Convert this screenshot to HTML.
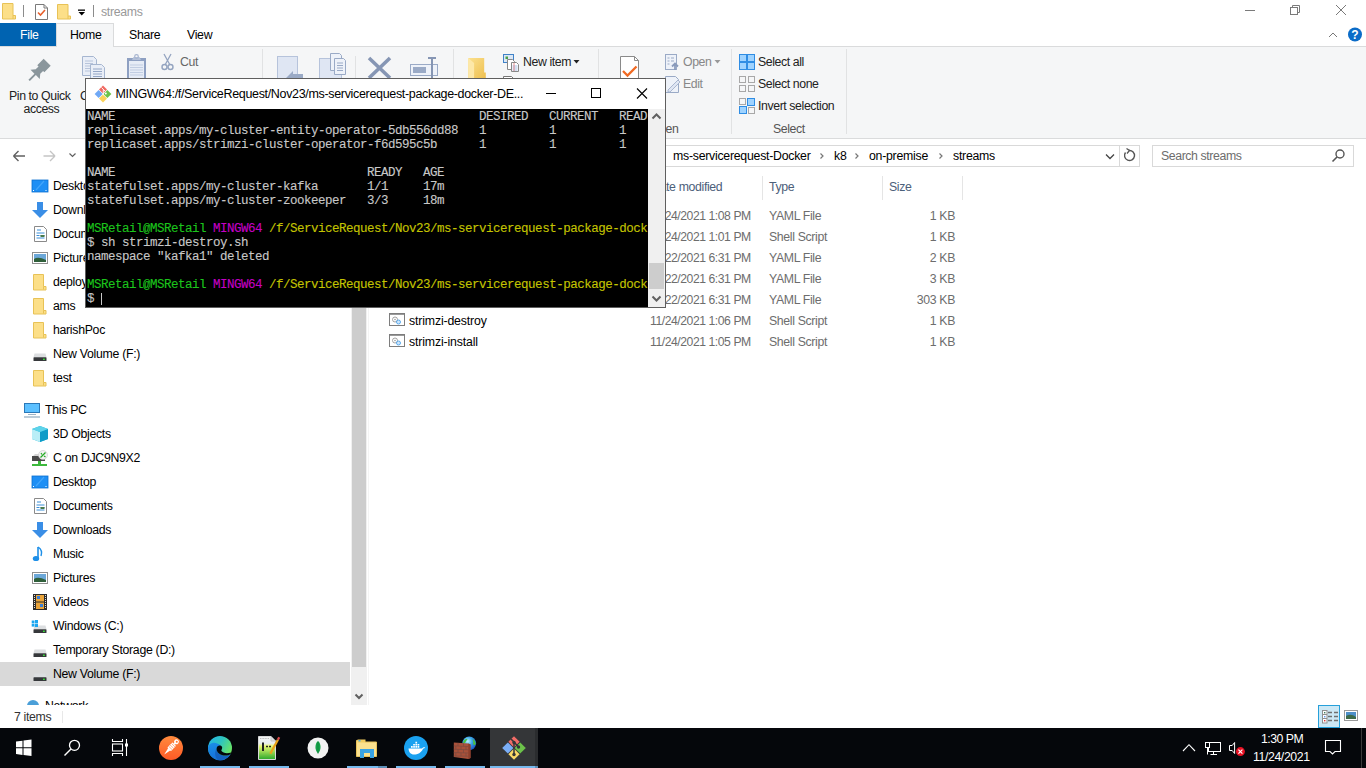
<!DOCTYPE html><html><head><meta charset="utf-8"><style>
*{margin:0;padding:0;box-sizing:border-box}
html,body{width:1366px;height:768px;overflow:hidden;background:#fff;font-family:"Liberation Sans",sans-serif;color:#000}
.a{position:absolute}
.t{position:absolute;white-space:pre}
svg{position:absolute;overflow:visible}
.tl{position:absolute;left:1px;font-family:"Liberation Mono",monospace;font-size:12.5px;letter-spacing:-0.5px;line-height:14px;white-space:pre;color:#c8c8c8;-webkit-text-stroke:0.12px currentColor}
.g{color:#1cc41c}.m{color:#c400c4}.y{color:#c4c400}
</style></head><body>
<svg style="left:0px;top:0px" width="100" height="22" viewBox="0 0 100 22"><path d="M2.5 3.5h10.5v12h2.5v3.5h-13z" fill="#fcdf88" stroke="#e8c256"/><path d="M13 15.5v3.5" stroke="#e8c256"/><line x1="23.5" y1="5" x2="23.5" y2="17" stroke="#8c8c8c"/><path d="M35.5 4.5h8.5l3.5 3.5v11.5h-12z" fill="#fff" stroke="#7a7a7a"/><path d="M44 4.5v3.5h3.5" fill="none" stroke="#7a7a7a"/><path d="M38 12.5l2.5 2.5 4.5-5" fill="none" stroke="#e8602c" stroke-width="1.6"/><path d="M57.5 4.5h10.5v11.5h2.5v3h-13z" fill="#fcdf88" stroke="#e8c256"/><path d="M68 16v3" stroke="#e8c256"/><rect x="78" y="9.5" width="7" height="1.3" fill="#000"/><path d="M78.5 12h6.5l-3.25 3.5z" fill="#000"/><line x1="93.5" y1="5" x2="93.5" y2="17" stroke="#8c8c8c"/></svg>
<div class="t" style="left:101px;top:3.74px;font-size:12.3px;line-height:16px;color:#999;letter-spacing:-0.300px;">streams</div>
<svg style="left:1240px;top:0px" width="126" height="22" viewBox="0 0 126 22"><line x1="5" y1="10.5" x2="15" y2="10.5" stroke="#7a7a7a"/><rect x="50.5" y="7.5" width="7" height="7" fill="none" stroke="#7a7a7a"/><path d="M52.5 7.5v-2h7v7h-2" fill="none" stroke="#7a7a7a"/><path d="M96 5l10 10M106 5l-10 10" stroke="#7a7a7a" stroke-width="1"/></svg>
<div class="a" style="left:0px;top:23px;width:56px;height:23px;background:#0063b1;"></div>
<div class="t" style="left:20px;top:26.74px;font-size:12.3px;line-height:16px;color:#fff;letter-spacing:-0.300px;">File</div>
<div class="a" style="left:0px;top:46px;width:1366px;height:1px;background:#dadbdc;"></div>
<div class="a" style="left:0px;top:47px;width:1366px;height:91px;background:#f5f6f7;"></div>
<div class="a" style="left:0px;top:138px;width:1366px;height:1px;background:#dadbdc;"></div>
<div class="a" style="left:56px;top:23px;width:58px;height:24px;background:#f5f6f7;border:1px solid #dadbdc;border-bottom:none"></div>
<div class="t" style="left:70px;top:26.74px;font-size:12.3px;line-height:16px;color:#000;letter-spacing:-0.300px;">Home</div>
<div class="t" style="left:129px;top:26.74px;font-size:12.3px;line-height:16px;color:#000;letter-spacing:-0.300px;">Share</div>
<div class="t" style="left:187px;top:26.74px;font-size:12.3px;line-height:16px;color:#000;letter-spacing:-0.300px;">View</div>
<svg style="left:1320px;top:24px" width="46" height="22" viewBox="0 0 46 22"><path d="M9 13l4-4 4 4" fill="none" stroke="#777" stroke-width="1"/><circle cx="35" cy="10.5" r="7" fill="#0b6cc8"/><text x="35" y="15" font-family="Liberation Sans" font-weight="bold" font-size="12" fill="#fff" text-anchor="middle">?</text></svg>
<div class="a" style="left:262px;top:49px;width:1px;height:85px;background:#e1e2e3;"></div>
<div class="a" style="left:453px;top:49px;width:1px;height:85px;background:#e1e2e3;"></div>
<div class="a" style="left:598px;top:49px;width:1px;height:85px;background:#e1e2e3;"></div>
<div class="a" style="left:731px;top:49px;width:1px;height:85px;background:#e1e2e3;"></div>
<div class="a" style="left:846px;top:49px;width:1px;height:85px;background:#e1e2e3;"></div>
<div class="a" style="left:355px;top:56px;width:1px;height:22px;background:#e1e2e3;"></div>
<svg style="left:20px;top:52px" width="40" height="32" viewBox="0 0 40 32"><g transform="translate(9.5 28) rotate(45)"><path d="M-1 0.5L1 0.5L1 -8L6.5 -8L3.2 -12L3.2 -16L5 -16L5 -25L-5 -25L-5 -16L-3.2 -16L-3.2 -12L-6.5 -8L-1 -8Z" fill="#8a969c"/></g></svg>
<div class="t" style="left:9px;top:87.74px;font-size:12.3px;line-height:16px;color:#222;letter-spacing:-0.400px;">Pin to Quick</div>
<div class="t" style="left:23.5px;top:100.74px;font-size:12.3px;line-height:16px;color:#222;letter-spacing:-0.400px;">access</div>
<svg style="left:80px;top:54px" width="30" height="26" viewBox="0 0 30 26"><path d="M2.5 2.5h11l3 3v16h-14z" fill="#e9eef7" stroke="#a6b6d0"/><path d="M5 7h8M5 9.5h8M5 12h8M5 14.5h8M5 17h8" stroke="#b7c4db"/><path d="M10.5 10.5h11l3 3v14h-14z" fill="#e9eef7" stroke="#a6b6d0"/><path d="M13 15h9M13 17.5h9M13 20h9M13 22.5h9" stroke="#94a6c6"/></svg>
<div class="t" style="left:80px;top:87.74px;font-size:12.3px;line-height:16px;color:#222;letter-spacing:-0.400px;">Copy</div>
<svg style="left:124px;top:52px" width="26" height="28" viewBox="0 0 26 28"><rect x="3" y="6" width="19" height="24" fill="#8ea0c2"/><rect x="5" y="9" width="15" height="21" fill="#e6ecf6"/><path d="M6 13h13M6 15.5h13M6 18h13M6 20.5h13M6 23h13" stroke="#c1cde2"/><path d="M8 8h9l-1.5-3h-6z" fill="#b3c0d8"/><circle cx="12.5" cy="4.5" r="1.8" fill="none" stroke="#a6b4cf" stroke-width="1.2"/></svg>
<svg style="left:160px;top:52px" width="18" height="20" viewBox="0 0 18 20"><path d="M4 2l6 11M11 2l-6 11" stroke="#94a4c0" stroke-width="1.3"/><circle cx="4.5" cy="15" r="2.5" fill="none" stroke="#94a4c0" stroke-width="1.4"/><circle cx="10.5" cy="15" r="2.5" fill="none" stroke="#94a4c0" stroke-width="1.4"/></svg>
<div class="t" style="left:180px;top:53.74px;font-size:12.3px;line-height:16px;color:#666;letter-spacing:-0.400px;">Cut</div>
<svg style="left:275px;top:54px" width="32" height="26" viewBox="0 0 32 26"><rect x="2.5" y="2.5" width="20" height="24" fill="#dfe6f3" stroke="#b6c3db"/><path d="M11 24l7-7v3h10v6h-17z" fill="#9aaac6"/></svg>
<svg style="left:317px;top:50px" width="32" height="30" viewBox="0 0 32 30"><rect x="2.5" y="8.5" width="22" height="22" fill="#dfe6f3" stroke="#b6c3db"/><path d="M13.5 3.5h9l2 2v15h-11z" fill="#eef2f9" stroke="#9aaac6"/><path d="M17.5 8.5h9l2 2v14h-11z" fill="#eef2f9" stroke="#9aaac6"/><path d="M20 13h6M20 15.5h6M20 18h6M20 20.5h6" stroke="#9aaac6"/></svg>
<svg style="left:366px;top:56px" width="28" height="24" viewBox="0 0 28 24"><path d="M3 2l21 20M24 2l-21 20" stroke="#8696b4" stroke-width="3.6"/></svg>
<svg style="left:408px;top:54px" width="32" height="26" viewBox="0 0 32 26"><rect x="2.5" y="10.5" width="27" height="11" fill="#eef2f9" stroke="#9aaac6"/><rect x="5" y="13" width="13" height="6" fill="#9aaac6"/><path d="M24 4v22" stroke="#8696b4" stroke-width="2"/><path d="M20 4h8" stroke="#8696b4" stroke-width="2"/></svg>
<svg style="left:466px;top:56px" width="22" height="24" viewBox="0 0 22 24"><defs><linearGradient id="nf" x1="0" y1="0" x2="1" y2="1"><stop offset="0" stop-color="#fbe08e"/><stop offset="1" stop-color="#eebf4e"/></linearGradient></defs><path d="M2.3 2.1H18.2V16.4H19.8V22.5H2.3Z" fill="url(#nf)"/><path d="M2.3 2.1L8.1 6.9V22.5H2.3Z" fill="#fde8a8"/></svg>
<svg style="left:500px;top:52px" width="22" height="20" viewBox="0 0 22 20"><rect x="3.5" y="2.5" width="10" height="8" fill="#dbe7f5" stroke="#3f82c8"/><rect x="5.5" y="4.5" width="2.5" height="2.5" fill="#4aa04a"/><path d="M7.5 7.5h5l2 2v8h-7z" fill="#fff" stroke="#888"/><path d="M11.5 10.5h5l2 2v7h-7z" fill="#fff" stroke="#888"/><path d="M12.5 14h5M12.5 16h5M12.5 18h5" stroke="#8fb0e0" stroke-width="0.8"/><path d="M14 11v8" stroke="#e07070" stroke-width="0.8"/></svg>
<div class="t" style="left:523px;top:53.74px;font-size:12.3px;line-height:16px;color:#222;letter-spacing:-0.400px;">New item</div>
<svg style="left:572px;top:58px" width="10" height="8" viewBox="0 0 10 8"><path d="M1.5 2h6l-3 3.5z" fill="#222"/></svg>
<svg style="left:500px;top:74px" width="20" height="6" viewBox="0 0 20 6"><path d="M3.5 5.5v-3h8l2 2" fill="#fff" stroke="#777"/></svg>
<svg style="left:618px;top:54px" width="26" height="26" viewBox="0 0 26 26"><path d="M2.5 2.5h14l4 4v19h-18z" fill="#fff" stroke="#8a8a8a"/><path d="M16.5 2.5v4h4" fill="none" stroke="#8a8a8a"/><path d="M5 17l4.5 4.5 9-9" fill="none" stroke="#f06a23" stroke-width="2.3"/></svg>
<svg style="left:663px;top:52px" width="18" height="20" viewBox="0 0 18 20"><rect x="2.5" y="2.5" width="11" height="15" fill="#eef2f9" stroke="#9aaac6"/><path d="M4.5 6h2M4.5 9h2M4.5 12h2M8 6h3M8 9h3" stroke="#9aaac6" stroke-width="1.2"/><path d="M12 18v-6M9 14.5l3-3 3 3" fill="none" stroke="#8a9bbb" stroke-width="1.8"/></svg>
<div class="t" style="left:683px;top:53.74px;font-size:12.3px;line-height:16px;color:#888;letter-spacing:-0.400px;">Open</div>
<svg style="left:713px;top:58px" width="10" height="8" viewBox="0 0 10 8"><path d="M1.5 2h6l-3 3.5z" fill="#999"/></svg>
<svg style="left:663px;top:74px" width="20" height="20" viewBox="0 0 20 20"><path d="M2.5 2.5h10l3 3v13h-13z" fill="#eef2f9" stroke="#9aaac6"/><path d="M5 16l10-10 2 2-10 10h-2z" fill="#dfe6f3" stroke="#9aaac6" stroke-width="0.8"/></svg>
<div class="t" style="left:683px;top:75.74px;font-size:12.3px;line-height:16px;color:#888;letter-spacing:-0.400px;">Edit</div>
<svg style="left:737px;top:52px" width="20" height="20" viewBox="0 0 20 20"><rect x="2.5" y="2.5" width="7" height="7" fill="#9fd3ff" stroke="#2f8de4"/><rect x="10.5" y="2.5" width="7" height="7" fill="#9fd3ff" stroke="#2f8de4"/><rect x="2.5" y="10.5" width="7" height="7" fill="#9fd3ff" stroke="#2f8de4"/><rect x="10.5" y="10.5" width="7" height="7" fill="#9fd3ff" stroke="#2f8de4"/></svg>
<div class="t" style="left:758px;top:53.74px;font-size:12.3px;line-height:16px;color:#222;letter-spacing:-0.400px;">Select all</div>
<svg style="left:737px;top:74px" width="20" height="20" viewBox="0 0 20 20"><rect x="2.5" y="2.5" width="6" height="6" fill="none" stroke="#a8a8a8"/><rect x="11.5" y="2.5" width="6" height="6" fill="none" stroke="#a8a8a8"/><rect x="2.5" y="11.5" width="6" height="6" fill="none" stroke="#a8a8a8"/><rect x="11.5" y="11.5" width="6" height="6" fill="none" stroke="#a8a8a8"/></svg>
<div class="t" style="left:758px;top:75.74px;font-size:12.3px;line-height:16px;color:#222;letter-spacing:-0.400px;">Select none</div>
<svg style="left:737px;top:96px" width="20" height="20" viewBox="0 0 20 20"><rect x="2.5" y="2.5" width="6" height="6" fill="none" stroke="#a8a8a8"/><rect x="10.5" y="2.5" width="7" height="7" fill="#9fd3ff" stroke="#2f8de4"/><rect x="2.5" y="10.5" width="7" height="7" fill="#9fd3ff" stroke="#2f8de4"/><rect x="11.5" y="11.5" width="6" height="6" fill="none" stroke="#a8a8a8"/></svg>
<div class="t" style="left:758px;top:97.74px;font-size:12.3px;line-height:16px;color:#222;letter-spacing:-0.400px;">Invert selection</div>
<div class="t" style="left:650px;top:120.74px;font-size:12.3px;line-height:16px;color:#555;letter-spacing:-0.400px;">Open</div>
<div class="t" style="left:773px;top:120.74px;font-size:12.3px;line-height:16px;color:#555;letter-spacing:-0.400px;">Select</div>
<svg style="left:0px;top:139px" width="100" height="36" viewBox="0 0 100 36"><path d="M13.5 17h11.5M13.5 17l5-5M13.5 17l5 5" fill="none" stroke="#606060" stroke-width="1.4"/><path d="M55 17h-11.5M55 17l-5-5M55 17l-5 5" fill="none" stroke="#c5c5c5" stroke-width="1.4"/><path d="M69.5 14.5l3 3 3-3" fill="none" stroke="#606060" stroke-width="1.2"/></svg>
<div class="a" style="left:100px;top:145px;width:1040px;height:22px;border:1px solid #d9d9d9;background:#fff"></div>
<div class="a" style="left:1119px;top:146px;width:1px;height:20px;background:#d9d9d9;"></div>
<div class="t" style="left:673px;top:147.74px;font-size:12.3px;line-height:16px;color:#000;letter-spacing:-0.250px;">ms-servicerequest-Docker</div>
<div class="t" style="left:834px;top:147.74px;font-size:12.3px;line-height:16px;color:#000;letter-spacing:-0.250px;">k8</div>
<div class="t" style="left:869px;top:147.74px;font-size:12.3px;line-height:16px;color:#000;letter-spacing:-0.250px;">on-premise</div>
<div class="t" style="left:953px;top:147.74px;font-size:12.3px;line-height:16px;color:#000;letter-spacing:-0.250px;">streams</div>
<svg style="left:0px;top:145px" width="1366" height="22" viewBox="0 0 1366 22"><path d="M820.5 8.5l2.5 2.5-2.5 2.5M855.5 8.5l2.5 2.5-2.5 2.5M939.5 8.5l2.5 2.5-2.5 2.5" fill="none" stroke="#777" stroke-width="1.2"/><path d="M1106 9.5l4 4 4-4" fill="none" stroke="#444" stroke-width="1.3"/><path d="M1125.5 7.5a5 5 0 1 0 3.5-2" fill="none" stroke="#555" stroke-width="1.4"/><path d="M1126.5 3.5l3 2-2.5 3" fill="none" stroke="#555" stroke-width="1.3"/></svg>
<div class="a" style="left:1152px;top:145px;width:202px;height:22px;border:1px solid #d9d9d9;background:#fff"></div>
<div class="t" style="left:1161px;top:147.74px;font-size:12.3px;line-height:16px;color:#6d6d6d;letter-spacing:-0.400px;">Search streams</div>
<svg style="left:1330px;top:148px" width="20" height="16" viewBox="0 0 20 16"><circle cx="10" cy="6" r="4" fill="none" stroke="#555" stroke-width="1.4"/><path d="M7 9l-4.5 4.5" stroke="#555" stroke-width="1.6"/></svg>
<div class="a" style="left:762px;top:176px;width:1px;height:24px;background:#e5e5e5;"></div>
<div class="a" style="left:882px;top:176px;width:1px;height:24px;background:#e5e5e5;"></div>
<div class="a" style="left:962px;top:176px;width:1px;height:24px;background:#e5e5e5;"></div>
<div class="t" style="left:651px;top:178.74px;font-size:12.3px;line-height:16px;color:#4c607a;letter-spacing:-0.350px;">Date modified</div>
<div class="t" style="left:769px;top:178.74px;font-size:12.3px;line-height:16px;color:#4c607a;letter-spacing:-0.350px;">Type</div>
<div class="t" style="left:889px;top:178.74px;font-size:12.3px;line-height:16px;color:#4c607a;letter-spacing:-0.350px;">Size</div>
<div class="t" style="left:650px;top:207.77px;font-size:12.2px;line-height:16px;color:#6d6d6d;letter-spacing:-0.45px">11/24/2021 1:08 PM</div>
<div class="t" style="left:769px;top:207.74px;font-size:12.3px;line-height:16px;color:#6d6d6d;letter-spacing:-0.350px;">YAML File</div>
<div class="t" style="left:855px;width:100px;text-align:right;top:207.74px;font-size:12.3px;letter-spacing:-0.35px;line-height:16px;color:#6d6d6d">1 KB</div>
<div class="t" style="left:650px;top:228.77px;font-size:12.2px;line-height:16px;color:#6d6d6d;letter-spacing:-0.45px">11/24/2021 1:01 PM</div>
<div class="t" style="left:769px;top:228.74px;font-size:12.3px;line-height:16px;color:#6d6d6d;letter-spacing:-0.350px;">Shell Script</div>
<div class="t" style="left:855px;width:100px;text-align:right;top:228.74px;font-size:12.3px;letter-spacing:-0.35px;line-height:16px;color:#6d6d6d">1 KB</div>
<div class="t" style="left:650px;top:249.77px;font-size:12.2px;line-height:16px;color:#6d6d6d;letter-spacing:-0.45px">11/22/2021 6:31 PM</div>
<div class="t" style="left:769px;top:249.74px;font-size:12.3px;line-height:16px;color:#6d6d6d;letter-spacing:-0.350px;">YAML File</div>
<div class="t" style="left:855px;width:100px;text-align:right;top:249.74px;font-size:12.3px;letter-spacing:-0.35px;line-height:16px;color:#6d6d6d">2 KB</div>
<div class="t" style="left:650px;top:270.77px;font-size:12.2px;line-height:16px;color:#6d6d6d;letter-spacing:-0.45px">11/22/2021 6:31 PM</div>
<div class="t" style="left:769px;top:270.74px;font-size:12.3px;line-height:16px;color:#6d6d6d;letter-spacing:-0.350px;">YAML File</div>
<div class="t" style="left:855px;width:100px;text-align:right;top:270.74px;font-size:12.3px;letter-spacing:-0.35px;line-height:16px;color:#6d6d6d">3 KB</div>
<div class="t" style="left:650px;top:291.77px;font-size:12.2px;line-height:16px;color:#6d6d6d;letter-spacing:-0.45px">11/22/2021 6:31 PM</div>
<div class="t" style="left:769px;top:291.74px;font-size:12.3px;line-height:16px;color:#6d6d6d;letter-spacing:-0.350px;">YAML File</div>
<div class="t" style="left:855px;width:100px;text-align:right;top:291.74px;font-size:12.3px;letter-spacing:-0.35px;line-height:16px;color:#6d6d6d">303 KB</div>
<svg style="left:389px;top:313px" width="17" height="14" viewBox="0 0 17 14"><rect x="0.5" y="0.5" width="15" height="12" fill="#fff" stroke="#7d7d7d"/><path d="M1 1.5h14" stroke="#9a9a9a"/><circle cx="6" cy="6.5" r="2.5" fill="none" stroke="#9a9a9a" stroke-width="0.9"/><circle cx="6" cy="6.5" r="0.8" fill="#9a9a9a"/><circle cx="9.5" cy="9" r="2" fill="#cfe6fb" stroke="#3d9be8" stroke-width="0.8"/></svg>
<div class="t" style="left:409px;top:312.74px;font-size:12.3px;line-height:16px;color:#000;letter-spacing:-0.150px;">strimzi-destroy</div>
<div class="t" style="left:650px;top:312.77px;font-size:12.2px;line-height:16px;color:#6d6d6d;letter-spacing:-0.45px">11/24/2021 1:06 PM</div>
<div class="t" style="left:769px;top:312.74px;font-size:12.3px;line-height:16px;color:#6d6d6d;letter-spacing:-0.350px;">Shell Script</div>
<div class="t" style="left:855px;width:100px;text-align:right;top:312.74px;font-size:12.3px;letter-spacing:-0.35px;line-height:16px;color:#6d6d6d">1 KB</div>
<svg style="left:389px;top:334px" width="17" height="14" viewBox="0 0 17 14"><rect x="0.5" y="0.5" width="15" height="12" fill="#fff" stroke="#7d7d7d"/><path d="M1 1.5h14" stroke="#9a9a9a"/><circle cx="6" cy="6.5" r="2.5" fill="none" stroke="#9a9a9a" stroke-width="0.9"/><circle cx="6" cy="6.5" r="0.8" fill="#9a9a9a"/><circle cx="9.5" cy="9" r="2" fill="#cfe6fb" stroke="#3d9be8" stroke-width="0.8"/></svg>
<div class="t" style="left:409px;top:333.74px;font-size:12.3px;line-height:16px;color:#000;letter-spacing:-0.150px;">strimzi-install</div>
<div class="t" style="left:650px;top:333.77px;font-size:12.2px;line-height:16px;color:#6d6d6d;letter-spacing:-0.45px">11/24/2021 1:05 PM</div>
<div class="t" style="left:769px;top:333.74px;font-size:12.3px;line-height:16px;color:#6d6d6d;letter-spacing:-0.350px;">Shell Script</div>
<div class="t" style="left:855px;width:100px;text-align:right;top:333.74px;font-size:12.3px;letter-spacing:-0.35px;line-height:16px;color:#6d6d6d">1 KB</div>
<div class="a" style="left:0px;top:662px;width:350px;height:24px;background:#d9d9d9;"></div>
<div class="a" style="left:0;top:170px;width:350px;height:535px;overflow:hidden">
<svg style="left:32px;top:10.0px" width="16" height="12" viewBox="0 0 16 12"><rect x="0" y="0" width="16" height="12" fill="#1e8ff5" stroke="#0b6fd0" stroke-width="0.8"/><path d="M4 10l8-9" stroke="#5ab4ff" stroke-width="1.2" opacity="0.6"/><path d="M1 10.5h14" stroke="#fff" stroke-width="1" stroke-dasharray="1 11.5 1 1"/></svg>
<div class="t" style="left:53px;top:7.74px;font-size:12.3px;line-height:16px;letter-spacing:-0.3px">Desktop</div>
<svg style="left:32px;top:32.0px" width="16" height="16" viewBox="0 0 16 16"><path d="M5 0h6v8h5l-8 8l-8-8h5z" fill="#3a8ee6"/></svg>
<div class="t" style="left:53px;top:31.74px;font-size:12.3px;line-height:16px;letter-spacing:-0.3px">Downloads</div>
<svg style="left:34px;top:56.0px" width="13" height="16" viewBox="0 0 13 16"><path d="M0.5 0.5h9l3 3v12h-12z" fill="#fff" stroke="#8a8a8a"/><path d="M3 4h4M2.5 7h8M2.5 9.5h3M6.5 9.5h4M2.5 12h8" stroke="#3b8fd8" stroke-width="1"/><rect x="6.5" y="9" width="4" height="2" fill="#4a7a4a"/></svg>
<div class="t" style="left:53px;top:55.74px;font-size:12.3px;line-height:16px;letter-spacing:-0.3px">Documents</div>
<svg style="left:32px;top:82.0px" width="16" height="12" viewBox="0 0 16 12"><rect x="0.5" y="0.5" width="15" height="11" fill="#fff" stroke="#8f8f8f"/><rect x="2" y="2" width="12" height="8" fill="#6ba7d8"/><path d="M2 7q4-3 12 1v2h-12z" fill="#2f5f3a"/></svg>
<div class="t" style="left:53px;top:79.74px;font-size:12.3px;line-height:16px;letter-spacing:-0.3px">Pictures</div>
<svg style="left:33px;top:104.0px" width="16" height="17" viewBox="0 0 16 17"><path d="M0.5 0.5h10v12h2.5v3.5h-12.5z" fill="#fcdf88" stroke="#e8c256"/><path d="M10.5 12.5v3" stroke="#e8c256"/></svg>
<div class="t" style="left:53px;top:103.74px;font-size:12.3px;line-height:16px;letter-spacing:-0.3px">deployment</div>
<svg style="left:33px;top:128.0px" width="16" height="17" viewBox="0 0 16 17"><path d="M0.5 0.5h10v12h2.5v3.5h-12.5z" fill="#fcdf88" stroke="#e8c256"/><path d="M10.5 12.5v3" stroke="#e8c256"/></svg>
<div class="t" style="left:53px;top:127.74px;font-size:12.3px;line-height:16px;letter-spacing:-0.3px">ams</div>
<svg style="left:33px;top:152.0px" width="16" height="17" viewBox="0 0 16 17"><path d="M0.5 0.5h10v12h2.5v3.5h-12.5z" fill="#fcdf88" stroke="#e8c256"/><path d="M10.5 12.5v3" stroke="#e8c256"/></svg>
<div class="t" style="left:53px;top:151.74px;font-size:12.3px;line-height:16px;letter-spacing:-0.3px">harishPoc</div>
<svg style="left:32px;top:179.5px" width="16" height="14" viewBox="0 0 16 14"><path d="M2.5 3.5h11l1 3.8h-13z" fill="#dcdee0"/><rect x="1.5" y="7.3" width="13" height="3.8" rx="0.6" fill="#36383b"/><rect x="11" y="8.6" width="1.8" height="1.4" fill="#39e039"/></svg>
<div class="t" style="left:53px;top:175.74px;font-size:12.3px;line-height:16px;letter-spacing:-0.3px">New Volume (F:)</div>
<svg style="left:33px;top:200.0px" width="16" height="17" viewBox="0 0 16 17"><path d="M0.5 0.5h10v12h2.5v3.5h-12.5z" fill="#fcdf88" stroke="#e8c256"/><path d="M10.5 12.5v3" stroke="#e8c256"/></svg>
<div class="t" style="left:53px;top:199.74px;font-size:12.3px;line-height:16px;letter-spacing:-0.3px">test</div>
<svg style="left:24px;top:233.0px" width="16" height="16" viewBox="0 0 16 16"><rect x="0.5" y="0.5" width="15" height="9" fill="#5cc0ff" stroke="#2a78b8"/><path d="M4 11.5h8" stroke="#9fb4c6"/><path d="M0 14h16" stroke="#8faabf" stroke-width="1.2"/></svg>
<div class="t" style="left:45px;top:231.74px;font-size:12.3px;line-height:16px;letter-spacing:-0.3px">This PC</div>
<svg style="left:32px;top:256.0px" width="16" height="16" viewBox="0 0 16 16"><path d="M8 0l8 3v10l-8 3l-8-3v-10z" fill="#1fb5d6"/><path d="M0 3l8 3v10l-8-3z" fill="#b9eef7"/><path d="M8 6l8-3v10l-8 3z" fill="#0e9cc8"/><path d="M0 3l8-3l8 3l-8 3z" fill="#5ed3ea"/></svg>
<div class="t" style="left:53px;top:255.74px;font-size:12.3px;line-height:16px;letter-spacing:-0.3px">3D Objects</div>
<svg style="left:32px;top:280.0px" width="16" height="16" viewBox="0 0 16 16"><path d="M1 6l2-2h8l2 2z" fill="#d6d6d6"/><rect x="0" y="6" width="13" height="5" fill="#4a4a4a"/><rect x="6" y="11" width="3" height="3" fill="#3cb83c"/><rect x="0" y="14" width="15" height="2" fill="#3cb83c"/><circle cx="11" cy="5" r="4.5" fill="#f2f2f2" stroke="#c8c8c8" stroke-width="0.6"/><path d="M8.5 7.5l5-5M9 3l1 1.5M12 6l1.5 1" stroke="#22aa22" stroke-width="1.2"/></svg>
<div class="t" style="left:53px;top:279.74px;font-size:12.3px;line-height:16px;letter-spacing:-0.3px">C on DJC9N9X2</div>
<svg style="left:32px;top:306.0px" width="16" height="12" viewBox="0 0 16 12"><rect x="0" y="0" width="16" height="12" fill="#1e8ff5" stroke="#0b6fd0" stroke-width="0.8"/><path d="M4 10l8-9" stroke="#5ab4ff" stroke-width="1.2" opacity="0.6"/><path d="M1 10.5h14" stroke="#fff" stroke-width="1" stroke-dasharray="1 11.5 1 1"/></svg>
<div class="t" style="left:53px;top:303.74px;font-size:12.3px;line-height:16px;letter-spacing:-0.3px">Desktop</div>
<svg style="left:34px;top:328.0px" width="13" height="16" viewBox="0 0 13 16"><path d="M0.5 0.5h9l3 3v12h-12z" fill="#fff" stroke="#8a8a8a"/><path d="M3 4h4M2.5 7h8M2.5 9.5h3M6.5 9.5h4M2.5 12h8" stroke="#3b8fd8" stroke-width="1"/><rect x="6.5" y="9" width="4" height="2" fill="#4a7a4a"/></svg>
<div class="t" style="left:53px;top:327.74px;font-size:12.3px;line-height:16px;letter-spacing:-0.3px">Documents</div>
<svg style="left:32px;top:352.0px" width="16" height="16" viewBox="0 0 16 16"><path d="M5 0h6v8h5l-8 8l-8-8h5z" fill="#3a8ee6"/></svg>
<div class="t" style="left:53px;top:351.74px;font-size:12.3px;line-height:16px;letter-spacing:-0.3px">Downloads</div>
<svg style="left:32px;top:376.0px" width="16" height="16" viewBox="0 0 16 16"><path d="M6 1v11" stroke="#1d8fe8" stroke-width="1.6"/><ellipse cx="4" cy="12.5" rx="3.2" ry="2.6" fill="#1d8fe8"/><path d="M6 1q5 3 3 9" fill="none" stroke="#1d8fe8" stroke-width="1.4"/></svg>
<div class="t" style="left:53px;top:375.74px;font-size:12.3px;line-height:16px;letter-spacing:-0.3px">Music</div>
<svg style="left:32px;top:402.0px" width="16" height="12" viewBox="0 0 16 12"><rect x="0.5" y="0.5" width="15" height="11" fill="#fff" stroke="#8f8f8f"/><rect x="2" y="2" width="12" height="8" fill="#6ba7d8"/><path d="M2 7q4-3 12 1v2h-12z" fill="#2f5f3a"/></svg>
<div class="t" style="left:53px;top:399.74px;font-size:12.3px;line-height:16px;letter-spacing:-0.3px">Pictures</div>
<svg style="left:32px;top:424.0px" width="16" height="16" viewBox="0 0 16 16"><rect x="1" y="0" width="14" height="16" fill="#2b2b2b"/><rect x="4" y="1" width="8" height="6.5" fill="#e8a33a"/><rect x="4" y="8.5" width="8" height="6.5" fill="#e8a33a"/><rect x="5" y="2" width="3" height="3" fill="#3a7fd5"/><rect x="8" y="10" width="3" height="3" fill="#3a7fd5"/><path d="M2.5 1v14M13.5 1v14" stroke="#ddd" stroke-width="1" stroke-dasharray="1 1"/></svg>
<div class="t" style="left:53px;top:423.74px;font-size:12.3px;line-height:16px;letter-spacing:-0.3px">Videos</div>
<svg style="left:32px;top:451.5px" width="16" height="14" viewBox="0 0 16 14"><path d="M2.5 3.5h11l1 3.8h-13z" fill="#dcdee0"/><rect x="1.5" y="7.3" width="13" height="3.8" rx="0.6" fill="#36383b"/><rect x="11" y="8.6" width="1.8" height="1.4" fill="#39e039"/><rect x="-0.3" y="-1.5" width="2.8" height="2.8" fill="#1ba6f0"/><rect x="3" y="-2" width="3" height="3.3" fill="#1ba6f0"/><rect x="-0.3" y="1.8" width="2.8" height="2.8" fill="#1ba6f0"/><rect x="3" y="1.8" width="3" height="3.2" fill="#1ba6f0"/></svg>
<div class="t" style="left:53px;top:447.74px;font-size:12.3px;line-height:16px;letter-spacing:-0.3px">Windows (C:)</div>
<svg style="left:32px;top:475.5px" width="16" height="14" viewBox="0 0 16 14"><path d="M2.5 3.5h11l1 3.8h-13z" fill="#dcdee0"/><rect x="1.5" y="7.3" width="13" height="3.8" rx="0.6" fill="#36383b"/><rect x="11" y="8.6" width="1.8" height="1.4" fill="#39e039"/></svg>
<div class="t" style="left:53px;top:471.74px;font-size:12.3px;line-height:16px;letter-spacing:-0.3px">Temporary Storage (D:)</div>
<svg style="left:32px;top:499.5px" width="16" height="14" viewBox="0 0 16 14"><path d="M2.5 3.5h11l1 3.8h-13z" fill="#dcdee0"/><rect x="1.5" y="7.3" width="13" height="3.8" rx="0.6" fill="#36383b"/><rect x="11" y="8.6" width="1.8" height="1.4" fill="#39e039"/></svg>
<div class="t" style="left:53px;top:495.74px;font-size:12.3px;line-height:16px;letter-spacing:-0.3px">New Volume (F:)</div>
<svg style="left:24px;top:528.0px" width="16" height="16" viewBox="0 0 16 16"><path d="M3 8a6 6 0 0 1 12 0z" fill="#4a9fd8"/><path d="M0 8h16" stroke="#2d7fbf" stroke-width="1.2"/></svg>
<div class="t" style="left:45px;top:527.74px;font-size:12.3px;line-height:16px;letter-spacing:-0.3px">Network</div>
</div>
<div class="a" style="left:351px;top:176px;width:16px;height:529px;background:#f0f0f0;"></div>
<div class="a" style="left:352px;top:190px;width:14px;height:477px;background:#cdcdcd;"></div>
<svg style="left:351px;top:690px" width="16" height="14" viewBox="0 0 16 14"><path d="M4.5 4.5l3.5 3.5 3.5-3.5" fill="none" stroke="#606060" stroke-width="2"/></svg>
<div class="a" style="left:368px;top:176px;width:1px;height:529px;background:#f4f4f4;"></div>
<div class="t" style="left:14px;top:708.74px;font-size:12.3px;line-height:16px;color:#333;letter-spacing:-0.350px;">7 items</div>
<div class="a" style="left:62px;top:711px;width:1px;height:12px;background:#e8e8e8;"></div>
<div class="a" style="left:1318px;top:705px;width:22px;height:23px;background:#cce8f5;border:1px solid #26a0da"></div>
<svg style="left:1321px;top:709px" width="18" height="16" viewBox="0 0 18 16"><rect x="1.5" y="1.5" width="4.5" height="12.5" fill="#fff" stroke="#8f8f8f"/><path d="M1.5 5.5h4.5M1.5 9.5h4.5" stroke="#8f8f8f"/><rect x="3" y="3" width="1.4" height="1.4" fill="#3f7f5f"/><rect x="3" y="7" width="1.4" height="1.4" fill="#5a9af0"/><rect x="3" y="11" width="1.4" height="1.4" fill="#d33"/><path d="M7 3.5h4M13 3.5h4M7 7.5h4M13 7.5h4M7 11.5h4M13 11.5h4" stroke="#707070" stroke-width="1.3"/></svg>
<svg style="left:1344px;top:710px" width="15" height="11" viewBox="0 0 15 11"><rect x="0.5" y="0.5" width="13" height="10" fill="#fff" stroke="#9a9a9a"/><rect x="2" y="2" width="10" height="7" fill="#4d8fc9"/><path d="M2 6q5-3 10 1v2h-10z" fill="#3e6b4a"/></svg>
<div class="a" style="left:85px;top:78px;width:581px;height:230px;border:1px solid #5f5f5f;background:#fff">
<svg style="left:8px;top:6px" width="18" height="18" viewBox="0 0 18 18"><path d="M9 0.6l4 4-4 4-4-4z" fill="#f06b63"/><path d="M0.6 9l4-4 4 4-4 4z" fill="#6fa8f5"/><path d="M9.4 9l4-4 4 4-4 4z" fill="#6cc24a"/><path d="M5 13.4l4-4 4 4-4 4z" fill="#fad25a"/><path d="M7.5 2.5l1.8 1.8v6M9.3 4.3l2.2 2.2" stroke="#fff" stroke-width="0.9" fill="none"/><circle cx="11.8" cy="8.6" r="1" fill="#fff"/></svg>
<div class="t" style="left:29.5px;top:6.7px;font-size:12.5px;letter-spacing:-0.33px;line-height:16px">MINGW64:/f/ServiceRequest/Nov23/ms-servicerequest-package-docker-DE...</div>
<svg style="left:440px;top:0px" width="140" height="30" viewBox="0 0 140 30"><line x1="20" y1="14.5" x2="30" y2="14.5" stroke="#000"/><rect x="65.5" y="9.5" width="9" height="9" fill="none" stroke="#000"/><path d="M111 9.5l10 10M121 9.5l-10 10" stroke="#000" stroke-width="1.1"/></svg>
<div class="a" style="left:0;top:30px;width:562px;height:198px;background:#000;overflow:hidden">
<div class="tl" style="top:1px">NAME                                                    DESIRED   CURRENT   READ</div>
<div class="tl" style="top:15px">replicaset.apps/my-cluster-entity-operator-5db556dd88   1         1         1</div>
<div class="tl" style="top:29px">replicaset.apps/strimzi-cluster-operator-f6d595c5b      1         1         1</div>
<div class="tl" style="top:57px">NAME                                    READY   AGE</div>
<div class="tl" style="top:71px">statefulset.apps/my-cluster-kafka       1/1     17m</div>
<div class="tl" style="top:85px">statefulset.apps/my-cluster-zookeeper   3/3     18m</div>
<div class="tl" style="top:113px"><span class="g">MSRetail@MSRetail</span> <span class="m">MINGW64</span> <span class="y">/f/ServiceRequest/Nov23/ms-servicerequest-package-dock</span></div>
<div class="tl" style="top:127px">$ sh strimzi-destroy.sh</div>
<div class="tl" style="top:141px">namespace &quot;kafka1&quot; deleted</div>
<div class="tl" style="top:169px"><span class="g">MSRetail@MSRetail</span> <span class="m">MINGW64</span> <span class="y">/f/ServiceRequest/Nov23/ms-servicerequest-package-dock</span></div>
<div class="tl" style="top:183px">$ </div>
<div class="a" style="left:15px;top:184px;width:1px;height:12px;background:#c8c8c8;"></div>
</div>
<div class="a" style="left:562px;top:30px;width:17px;height:198px;background:#f0f0f0">
<div class="a" style="left:1px;top:154px;width:15px;height:26px;background:#cdcdcd;"></div>
<svg style="left:0px;top:0px" width="17" height="198" viewBox="0 0 17 198"><path d="M4.5 9.5l4-4 4 4" fill="none" stroke="#606060" stroke-width="2"/><path d="M4.5 187.5l4 4 4-4" fill="none" stroke="#606060" stroke-width="2"/></svg>
</div></div>
<div class="a" style="left:0px;top:728px;width:1366px;height:40px;background:#05070b;"></div>
<svg style="left:15px;top:739px" width="18" height="18" viewBox="0 0 18 18"><path d="M1 2.6l6.5-0.9v6.6h-6.5z M8.5 1.6l8-1.1v7.8h-8z M1 9.3h6.5v6.6l-6.5-0.9z M8.5 9.3h8v7.8l-8-1.1z" fill="#fff"/></svg>
<svg style="left:62px;top:738px" width="20" height="20" viewBox="0 0 20 20"><circle cx="12.5" cy="7.3" r="5" fill="none" stroke="#fff" stroke-width="1.3"/><path d="M9 11l-6.5 6.5" stroke="#fff" stroke-width="1.4"/></svg>
<svg style="left:111px;top:739px" width="20" height="18" viewBox="0 0 20 18"><path d="M1.5 0v2.5h10V0M1.5 17v-2.5h10V17" fill="none" stroke="#fff" stroke-width="1.1"/><rect x="1.5" y="5" width="10" height="7" fill="none" stroke="#fff" stroke-width="1.1"/><path d="M15.5 0v17" stroke="#fff" stroke-width="1.1"/><rect x="14" y="4.5" width="3" height="3" fill="#fff"/></svg>
<svg style="left:159px;top:736px" width="24" height="24" viewBox="0 0 24 24"><defs><linearGradient id="pm" x1="0" y1="0" x2="0" y2="1"><stop offset="0" stop-color="#ff8a3d"/><stop offset="1" stop-color="#ff5a26"/></linearGradient></defs><circle cx="12" cy="12" r="12" fill="url(#pm)"/><g transform="translate(5.2 18.5) rotate(-46)"><path d="M0 0L7.5 -1.6L7.5 1.6Z" fill="#fff"/><rect x="7" y="-2.6" width="7.5" height="5.2" rx="1" fill="#fff"/><path d="M9 -2.6v5.2M11 -2.6v5.2M13 -2.6v5.2" stroke="#ff7a3a" stroke-width="0.6"/><path d="M14.5 -1h1.5v2h-1.5z" fill="#fff"/><circle cx="17.7" cy="0" r="2.4" fill="#fff"/><circle cx="17.9" cy="0.2" r="1" fill="#ff7a3a"/></g></svg>
<svg style="left:208px;top:736px" width="24" height="24" viewBox="0 0 24 24"><defs><linearGradient id="eg" x1="0" y1="0" x2="1" y2="0.6"><stop offset="0" stop-color="#25b5ec"/><stop offset="0.5" stop-color="#2ec4c0"/><stop offset="1" stop-color="#6ee85e"/></linearGradient><linearGradient id="eb" x1="0" y1="0" x2="0.3" y2="1"><stop offset="0" stop-color="#1b8fe8"/><stop offset="1" stop-color="#1670d8"/></linearGradient></defs><circle cx="12" cy="12" r="12" fill="url(#eg)"/><path d="M0 12C0.5 7 7 4.5 12.5 9.5L9 11.5C7 14 7.5 19 11 21C15 22.8 19.5 21.5 22.6 18A12 12 0 0 1 0 12Z" fill="url(#eb)"/><path d="M8.6 12C8.5 14.5 9.3 16.2 11 17.5C14 20 19 20.3 22.8 18A12 12 0 0 1 9.5 23.7C7 21 6.2 16 8.6 12Z" fill="#1462c0"/><path d="M8.6 12.5C8.8 9.5 12.5 8.5 14 10.8C14.6 12 13.6 13.8 13.3 14.8C15 17.5 19.5 17.6 23 16.6L22.6 18.3C19 20.3 14 20 11 17.5C9.3 16.2 8.5 14.5 8.6 12.5Z" fill="#03060a"/></svg>
<div class="a" style="left:200px;top:766px;width:40px;height:2px;background:#76b9ed;"></div>
<svg style="left:257px;top:735px" width="24" height="26" viewBox="0 0 24 26"><defs><linearGradient id="np" x1="0" y1="0" x2="0" y2="1"><stop offset="0" stop-color="#f4f6f6"/><stop offset="0.3" stop-color="#e8eef0"/><stop offset="0.42" stop-color="#e8f870"/><stop offset="1" stop-color="#2aa82a"/></linearGradient></defs><path d="M1.5 1.5h12.5l4.5 4.5v18.5h-17z" fill="url(#np)" stroke="#d8d8d8"/><path d="M14 1.5v4.5h4.5" fill="#ddd" stroke="#c8c8c8"/><path d="M3 3.5h9" stroke="#bbb" stroke-dasharray="1 0.6"/><rect x="5" y="7.5" width="2" height="8.5" fill="#222"/><path d="M9 11.5h5" stroke="#222" stroke-width="1.6" stroke-dasharray="2 1"/><path d="M13.3 18.7l7.6-14" stroke="#e8a21a" stroke-width="2.3"/><path d="M20.9 4.7l1.3-2.4" stroke="#d84a4a" stroke-width="2.3"/></svg>
<div class="a" style="left:249px;top:766px;width:40px;height:2px;background:#76b9ed;"></div>
<svg style="left:307px;top:737px" width="22" height="22" viewBox="0 0 22 22"><circle cx="11" cy="11" r="10.5" fill="#f2f2f2"/><path d="M11 4C14.3 6.5 14.5 13 11 16.5C7.5 13 7.7 6.5 11 4Z" fill="#16a34a"/><path d="M11 5v11.5" stroke="#0f7f3a" stroke-width="0.7"/></svg>
<svg style="left:355px;top:738px" width="24" height="20" viewBox="0 0 24 20"><path d="M1.5 2.5h7l1.5 1.5h11.5v14.5h-20z" fill="#fbe18f" stroke="#e8c25a"/><rect x="2.5" y="1.5" width="8" height="3" fill="#f3cd60"/><rect x="3.5" y="2" width="2" height="1.5" fill="#4fb0e5"/><path d="M5 20v-9h14v9h-4v-5h-6v5z" fill="#3aa3e3"/></svg>
<div class="a" style="left:347px;top:766px;width:31px;height:2px;background:#76b9ed;"></div>
<div class="a" style="left:378px;top:766px;width:9px;height:2px;background:#5c8fb8;"></div>
<svg style="left:404px;top:736px" width="24" height="24" viewBox="0 0 24 24"><circle cx="12" cy="12" r="12" fill="#1aa1f0"/><path d="M4.5 12.5h13.5c0.8-1.2 2.2-1.6 3.2-1.2c-0.3 0.9-1.2 1.4-2.2 1.4c-1.6 4-5.3 5.8-9 5.8c-3.3 0-5.2-2.2-5.5-6z" fill="#fff"/><path d="M7 11.8v-1.7h1.7v1.7zM9.2 11.8v-1.7h1.7v1.7zM11.4 11.8v-1.7h1.7v1.7zM13.6 11.8v-1.7h1.7v1.7zM9.2 9.6v-1.7h1.7v1.7zM11.4 9.6v-1.7h1.7v1.7zM13.6 9.6v-1.7h1.7v1.7zM11.4 7.4v-1.7h1.7v1.7z" fill="#fff"/></svg>
<div class="a" style="left:396px;top:766px;width:40px;height:2px;background:#76b9ed;"></div>
<svg style="left:452px;top:736px" width="24" height="24" viewBox="0 0 24 24"><defs><radialGradient id="gl" cx="0.4" cy="0.35" r="0.7"><stop offset="0" stop-color="#bdf2ff"/><stop offset="0.45" stop-color="#3aa6e6"/><stop offset="1" stop-color="#1a4fc0"/></radialGradient></defs><circle cx="17.2" cy="7.3" r="6.9" fill="url(#gl)"/><path d="M11 6.5c1-3 3-4 4.5-3.5c-0.5 1.5-2 2-2.2 3.8c-0.8 0.5-1.6 0.3-2.3-0.3zM20.5 3c1.5 0.8 3 2.5 3.2 5c-0.8 1.5-1.8 1.2-2.5 0.2c0.5-1.8-0.2-3.5-0.7-5.2z" fill="#4cc43a"/><path d="M1.8 6.4l14.5 1.2l2.2 1v13.5l-2.2 0.8l-14.5-1.8z" fill="#a9513a"/><path d="M16.3 7.6l2.2 1v13.5l-2.2 0.8z" fill="#8e3f2c"/><path d="M1.8 9.8l14.5 0.8M1.8 13.2l14.5 0.6M1.8 16.6l14.5 0.4M1.8 20l14.5 0.2M6 6.8v3.2M11.5 7.2v3.2M3.8 10v3.3M9 10.2v3.3M14 10.5v3.3M6 13.4v3.3M11.5 13.6v3.3M3.8 16.8v3.3M9 16.9v3.3M14 17v3.3" stroke="#7a4a40" stroke-width="0.7"/></svg>
<div class="a" style="left:445px;top:766px;width:40px;height:2px;background:#76b9ed;"></div>
<div class="a" style="left:490px;top:728px;width:45px;height:40px;background:#343638;"></div>
<div class="a" style="left:535px;top:728px;width:3px;height:40px;background:#2a2c2e;"></div>
<svg style="left:501px;top:735px" width="26" height="26" viewBox="0 0 26 26"><path d="M13 1.2l5.6 5.6-5.6 5.6-5.6-5.6z" fill="#f26c67"/><path d="M1.2 13l5.6-5.6 5.6 5.6-5.6 5.6z" fill="#7aadf5"/><path d="M13.6 13l5.6-5.6 5.6 5.6-5.6 5.6z" fill="#6cc24a"/><path d="M7.4 19.2l5.6-5.6 5.6 5.6-5.6 5.6z" fill="#f9d867"/><path d="M10 4l3 3v12M13 7l4 4.5" stroke="#343638" stroke-width="1.5" fill="none"/><circle cx="13" cy="7.5" r="1.7" fill="#343638"/><circle cx="17.5" cy="12" r="1.7" fill="#343638"/><circle cx="13" cy="19.5" r="1.7" fill="#343638"/></svg>
<div class="a" style="left:490px;top:766px;width:45px;height:2px;background:#76b9ed;"></div>
<div class="a" style="left:535px;top:766px;width:3px;height:2px;background:#5c8fb8;"></div>
<svg style="left:1180px;top:738px" width="20" height="16" viewBox="0 0 20 16"><path d="M3 13l6-6.3 6 6.3" fill="none" stroke="#fff" stroke-width="1.1"/></svg>
<svg style="left:1204px;top:740px" width="20" height="18" viewBox="0 0 20 18"><rect x="4.5" y="2.5" width="12" height="9" fill="none" stroke="#fff"/><rect x="1.5" y="2.5" width="4" height="5" fill="#05070b" stroke="#fff"/><path d="M3.5 7.5v7M6.5 14.5h6.5M9.5 11.5v3" stroke="#fff"/></svg>
<svg style="left:1228px;top:740px" width="20" height="18" viewBox="0 0 20 18"><path d="M1.5 5.5h2.7l2.4-3v11l-2.4-3h-2.7z" fill="none" stroke="#fff"/><circle cx="12.4" cy="11.6" r="4.5" fill="#e81123"/><path d="M10.4 9.6l4 4M14.4 9.6l-4 4" stroke="#fff" stroke-width="1.1"/></svg>
<div class="t" style="left:1261px;top:730.74px;font-size:12.3px;line-height:16px;color:#fff;letter-spacing:-0.500px;">1:30 PM</div>
<div class="t" style="left:1253px;top:748.74px;font-size:12.3px;line-height:16px;color:#fff;letter-spacing:-0.400px;">11/24/2021</div>
<svg style="left:1324px;top:739px" width="20" height="20" viewBox="0 0 20 20"><path d="M1.5 1.5h15v11h-5.5l-2.5 2.5-2.5-2.5h-4.5z" fill="none" stroke="#fff" stroke-width="1.1"/></svg>
<div class="a" style="left:1361px;top:728px;width:1px;height:40px;background:#3a3a3a;"></div>
</body></html>
